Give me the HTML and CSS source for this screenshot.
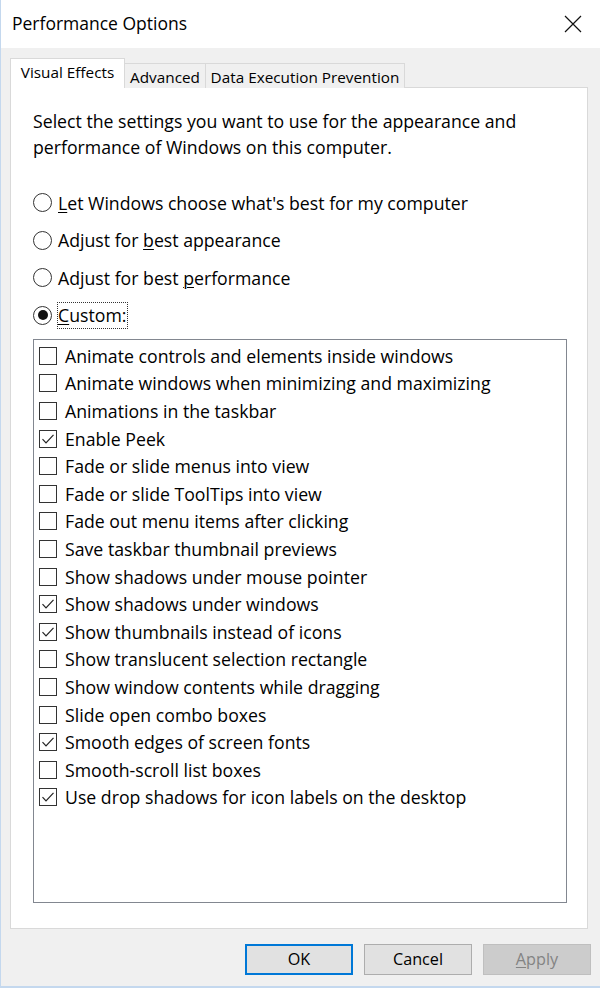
FILE: index.html
```html
<!DOCTYPE html>
<html lang="en">
<head>
<meta charset="utf-8">
<title>Performance Options</title>
<link rel="stylesheet" href="styles.css">
</head>
<body>
<div class="window">
  <div class="titlebar">
    <span class="title">Performance Options</span>
    <span class="close">
      <svg width="18" height="18" viewBox="0 0 18 18"><path d="M1 1 L17 17 M17 1 L1 17" stroke="#111" stroke-width="1.2" fill="none"/></svg>
    </span>
  </div>
  <div class="content">
    <div class="tabs">
      <div class="tab tab-active tab-ve">Visual Effects</div>
      <div class="tab tab-adv">Advanced</div>
      <div class="tab tab-dep">Data Execution Prevention</div>
    </div>
    <div class="panel">
      <p class="desc">Select the settings you want to use for the appearance and<br>performance of Windows on this computer.</p>
      <div class="radios">
        <div class="radio-row"><span class="radio"></span><span class="label"><u>L</u>et Windows choose what's best for my computer</span></div>
        <div class="radio-row"><span class="radio"></span><span class="label">Adjust for <u>b</u>est appearance</span></div>
        <div class="radio-row"><span class="radio"></span><span class="label">Adjust for best <u>p</u>erformance</span></div>
        <div class="radio-row"><span class="radio radio-on"><span class="dot"></span></span><span class="label focus"><u>C</u>ustom:</span></div>
      </div>
      <div class="list">
        <div class="item"><span class="cb"></span><span class="label">Animate controls and elements inside windows</span></div>
        <div class="item"><span class="cb"></span><span class="label">Animate windows when minimizing and maximizing</span></div>
        <div class="item"><span class="cb"></span><span class="label">Animations in the taskbar</span></div>
        <div class="item"><span class="cb"><svg viewBox="0 0 16 16"><path d="M2.5 8.2 L6 11.8 L13.5 3.8" stroke="#222" stroke-width="1.2" fill="none"/></svg></span><span class="label">Enable Peek</span></div>
        <div class="item"><span class="cb"></span><span class="label">Fade or slide menus into view</span></div>
        <div class="item"><span class="cb"></span><span class="label">Fade or slide ToolTips into view</span></div>
        <div class="item"><span class="cb"></span><span class="label">Fade out menu items after clicking</span></div>
        <div class="item"><span class="cb"></span><span class="label">Save taskbar thumbnail previews</span></div>
        <div class="item"><span class="cb"></span><span class="label">Show shadows under mouse pointer</span></div>
        <div class="item"><span class="cb"><svg viewBox="0 0 16 16"><path d="M2.5 8.2 L6 11.8 L13.5 3.8" stroke="#222" stroke-width="1.2" fill="none"/></svg></span><span class="label">Show shadows under windows</span></div>
        <div class="item"><span class="cb"><svg viewBox="0 0 16 16"><path d="M2.5 8.2 L6 11.8 L13.5 3.8" stroke="#222" stroke-width="1.2" fill="none"/></svg></span><span class="label">Show thumbnails instead of icons</span></div>
        <div class="item"><span class="cb"></span><span class="label">Show translucent selection rectangle</span></div>
        <div class="item"><span class="cb"></span><span class="label">Show window contents while dragging</span></div>
        <div class="item"><span class="cb"></span><span class="label">Slide open combo boxes</span></div>
        <div class="item"><span class="cb"><svg viewBox="0 0 16 16"><path d="M2.5 8.2 L6 11.8 L13.5 3.8" stroke="#222" stroke-width="1.2" fill="none"/></svg></span><span class="label">Smooth edges of screen fonts</span></div>
        <div class="item"><span class="cb"></span><span class="label">Smooth-scroll list boxes</span></div>
        <div class="item"><span class="cb"><svg viewBox="0 0 16 16"><path d="M2.5 8.2 L6 11.8 L13.5 3.8" stroke="#222" stroke-width="1.2" fill="none"/></svg></span><span class="label">Use drop shadows for icon labels on the desktop</span></div>
      </div>
    </div>
    <div class="buttons">
      <button class="btn btn-default">OK</button>
      <button class="btn">Cancel</button>
      <button class="btn btn-disabled"><u>A</u>pply</button>
    </div>
  </div>
</div>
</body>
</html>
```
FILE: styles.css
```css
html, body {
  margin: 0;
  padding: 0;
}
body {
  width: 600px;
  height: 988px;
  overflow: hidden;
  background: #f0f0f0;
  font-family: "Open Sans", "Noto Sans", sans-serif;
  color: #000;
}
.window {
  width: 600px;
  height: 988px;
  box-sizing: border-box;
  border-left: 1px solid #c4d8ee;
  border-bottom: 2px solid #c4d8ee;
  display: flex;
  flex-direction: column;
  background: #f0f0f0;
}
.titlebar {
  height: 48px;
  flex: none;
  background: #fff;
  display: flex;
  align-items: center;
  justify-content: space-between;
  padding: 0 18px 0 11px;
}
.title {
  font-size: 17.5px;
  margin-top: -2px;
}
.close {
  display: flex;
  width: 18px;
  height: 18px;
  margin-top: -1px;
}
.content {
  flex: 1;
  padding: 10px 12px 0 9px;
  display: flex;
  flex-direction: column;
}
.tabs {
  display: flex;
  align-items: flex-end;
  height: 30px;
  position: relative;
  z-index: 1;
}
.tab {
  box-sizing: border-box;
  height: 25px;
  border: 1px solid #d9d9d9;
  border-bottom: none;
  background: #f0f0f0;
  font-size: 15.3px;
  display: flex;
  align-items: center;
  justify-content: center;
  margin-left: -1px;
  padding-top: 1px;
  white-space: nowrap;
}
.tab-active {
  height: 30px;
  background: #fff;
  margin-left: 0;
  padding-top: 0;
  padding-bottom: 3px;
}
.tab-ve { width: 115px; }
.tab-adv { width: 82px; }
.tab-dep { width: 200px; }
.panel {
  box-sizing: border-box;
  height: 842px;
  margin-top: -1px;
  border: 1px solid #d9d9d9;
  background: #fff;
  padding: 20px 0 0 22px;
}
.desc {
  margin: 0;
  font-size: 17.7px;
  line-height: 26px;
}
.radios {
  margin-top: 24px;
}
.radio-row {
  height: 37.5px;
  display: flex;
  align-items: center;
  font-size: 17.7px;
}
.radio {
  box-sizing: border-box;
  width: 19px;
  height: 19px;
  border: 1.3px solid #333;
  border-radius: 50%;
  margin-right: 6px;
  display: flex;
  align-items: center;
  justify-content: center;
  flex: none;
}
.dot {
  width: 10px;
  height: 10px;
  border-radius: 50%;
  background: #111;
}
.focus {
  outline: 1px dotted #333;
  outline-offset: 0;
  padding: 0 1px 0 0;
  line-height: 25px;
}
u {
  text-decoration: underline;
  text-underline-offset: 2px;
  text-decoration-thickness: 1px;
}
.list {
  box-sizing: border-box;
  width: 534px;
  height: 564px;
  margin-top: 5px;
  border: 1px solid #828790;
  padding: 2px 0 0 5px;
}
.item {
  height: 27.6px;
  display: flex;
  align-items: center;
  font-size: 17.7px;
  white-space: nowrap;
}
.cb {
  box-sizing: border-box;
  width: 18px;
  height: 18px;
  border: 1px solid #333;
  margin-right: 8px;
  flex: none;
  display: flex;
}
.cb svg {
  width: 16px;
  height: 16px;
}
.buttons {
  display: flex;
  justify-content: flex-end;
  gap: 11px;
  padding: 15px 0 0 0;
  margin-right: -3px;
}
.btn {
  box-sizing: border-box;
  width: 108px;
  height: 31px;
  font-family: "Open Sans", "Noto Sans", sans-serif;
  font-size: 16.2px;
  color: #000;
  background: #e1e1e1;
  border: 1px solid #adadad;
  padding: 0 0 2px 0;
  margin: 0;
}
.btn-default {
  border: 2px solid #0078d7;
}
.btn-disabled {
  background: #cccccc;
  border-color: #bfbfbf;
  color: #838383;
}
```
